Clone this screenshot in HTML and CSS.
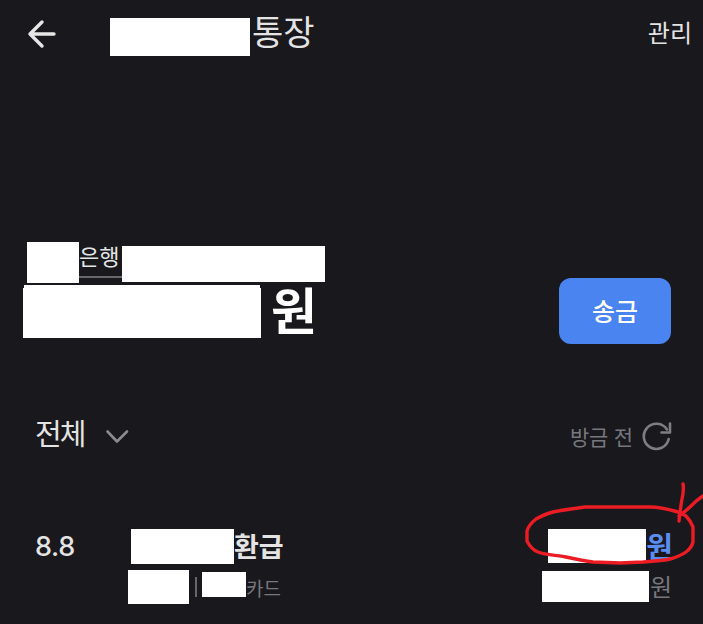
FILE: index.html
```html
<!DOCTYPE html>
<html lang="ko">
<head>
    <meta charset="UTF-8">
    <meta name="viewport" content="width=device-width, initial-scale=1.0">
    <title>통장</title>
    <link rel="stylesheet" href="styles.css">
</head>
<body>

<div class="page">
    <!-- Header -->
    <header class="topbar">
        <svg class="back-icon" width="30" height="30" viewBox="0 0 30 30" fill="none" stroke="#e6e6e6" stroke-width="3.4" stroke-linecap="round" stroke-linejoin="round">
            <path d="M27 15H3M15 3L3 15L15 27"/>
        </svg>
        <div class="mask mask-title"></div>
        <span class="title">통장</span>
        <span class="manage">관리</span>
    </header>

    <!-- Account -->
    <section class="account">
        <div class="account-info">
            <div class="bank-row">
                <div class="mask mask-bank"></div>
                <span class="bank-name">은행</span>
                <div class="mask mask-number"></div>
            </div>
            <div class="balance-row">
                <div class="balance-mask">
                    <div class="mask mask-balance-top"></div>
                    <div class="mask mask-balance"></div>
                </div>
                <span class="balance-unit">원</span>
            </div>
        </div>
        <button class="send-btn">송금</button>
    </section>

    <!-- Filter -->
    <section class="filter">
        <div class="filter-left">
            <span class="filter-name">전체</span>
            <svg class="chevron" width="24" height="15" viewBox="0 0 24 15" fill="none" stroke="#8a8a8f" stroke-width="2.6" stroke-linecap="round" stroke-linejoin="round">
                <path d="M2.5 2.5L12 12.5L22 2.5"/>
            </svg>
        </div>
        <div class="filter-right">
            <span class="updated">방금 전</span>
            <svg width="30" height="30" viewBox="0 0 30 30" fill="none" stroke="#7d7d82" stroke-width="2.6" stroke-linecap="round" stroke-linejoin="round">
                <path d="M26.7 18A12.6 12.6 0 1 1 25 8.5"/>
                <path d="M28 2.5V11.5H19.5"/>
            </svg>
        </div>
    </section>

    <!-- Transaction -->
    <section class="tx">
        <span class="tx-date">8.8</span>
        <div class="tx-main">
            <div class="tx-name">
                <div class="mask mask-name"></div>
                <span>환급</span>
            </div>
            <div class="tx-sub">
                <div class="mask mask-sub1"></div>
                <span class="tx-sep"></span>
                <div class="mask mask-sub2"></div>
                <span>카드</span>
            </div>
        </div>
        <div class="tx-amount">
            <div class="tx-value">
                <div class="mask mask-value"></div>
                <span>원</span>
            </div>
            <div class="tx-balance">
                <div class="mask mask-rest"></div>
                <span>원</span>
            </div>
        </div>
    </section>

    <!-- Red marker scribble on top of the screenshot -->
    <svg class="scribble" width="703" height="624" viewBox="0 0 703 624" fill="none" stroke="#ec1c24" stroke-width="3.4" stroke-linecap="round" stroke-linejoin="round">
        <path d="M678 512C668 509 658 507 650 507L620 507L585 507C572 509 562 510 553 512C546 514 541 516 536 519C531 523 528 527 527 531L527 541C530 547 533 550 538 552C546 555 555 555 566 557C575 559 584 561 593 562L620 563L643 562C653 561 662 561 670 559C677 557 682 555 686 552C690 549 692 546 693 542L693 527C691 522 689 519 686 516C683 514 681 513 678 512Z"/>
        <path d="M683 484C684 488 683 491 683 494C681 503 680 512 679 521"/>
        <path d="M703 496C698 499 695 502 691 506C687 510 683 513 679 516"/>
    </svg>
</div>

</body>
</html>
```

FILE: styles.css
```css
* {
    box-sizing: border-box;
}
html, body {
    margin: 0;
    padding: 0;
}
body {
    background-color: #18181d;
    font-family: "Noto Sans CJK KR", "Noto Sans", sans-serif;
    color: #e4e4e4;
}
.page {
    position: relative;
    width: 703px;
    height: 624px;
    overflow: hidden;
}
.mask {
    background: #fff;
    flex: none;
}
.scribble {
    position: absolute;
    top: 0;
    left: 0;
    pointer-events: none;
}

/* Header */
.topbar {
    display: flex;
    align-items: flex-start;
    height: 242px;
    padding: 18px 11px 0 27px;
}
.back-icon {
    margin-top: 1px;
}
.mask-title {
    width: 140px;
    height: 38px;
    margin-left: 53px;
}
.title {
    margin-left: 2px;
    margin-top: -3px;
    font-size: 34px;
    line-height: 32px;
}
.manage {
    margin-left: auto;
    font-size: 24px;
    line-height: 28px;
}

/* Account */
.account {
    display: flex;
    justify-content: space-between;
    align-items: flex-start;
    height: 173px;
    padding-right: 32px;
}
.account-info {
    display: flex;
    flex-direction: column;
}
.bank-row {
    display: flex;
    align-items: flex-start;
    padding-left: 27px;
    height: 43px;
}
.mask-bank {
    width: 52px;
    height: 41px;
}
.bank-name {
    width: 43px;
    height: 36px;
    border-bottom: 2px solid #66666b;
    font-size: 22px;
    line-height: 27px;
}
.mask-number {
    width: 203px;
    height: 36px;
    margin-top: 4px;
}
.balance-row {
    display: flex;
    align-items: center;
    padding-left: 23px;
}
.balance-mask {
    display: flex;
    flex-direction: column;
}
.mask-balance-top {
    width: 236px;
    height: 3px;
    margin-left: 1px;
}
.mask-balance {
    width: 238px;
    height: 50px;
}
.balance-unit {
    margin-left: 10px;
    margin-top: -6px;
    font-size: 50px;
    line-height: 53px;
    font-weight: 700;
    color: #fff;
}
.send-btn {
    width: 112px;
    height: 66px;
    margin-top: 36px;
    padding: 0 0 2px;
    border: none;
    border-radius: 12px;
    background-color: #4a84f0;
    color: #fff;
    font-family: inherit;
    font-size: 25px;
    font-weight: 500;
}

/* Filter */
.filter {
    display: flex;
    justify-content: space-between;
    align-items: center;
    height: 40px;
    padding: 0 31px 0 35px;
    margin-top: -1px;
}
.filter-left {
    display: flex;
    align-items: center;
    gap: 21px;
}
.filter-name {
    font-size: 29px;
    line-height: 36px;
    letter-spacing: -2px;
    margin-top: -4px;
}
.chevron {
    margin-top: 4px;
}
.filter-right {
    display: flex;
    align-items: center;
    gap: 9px;
    margin-top: 3px;
}
.updated {
    font-size: 21px;
    line-height: 28px;
    letter-spacing: -0.2px;
    color: #77777d;
}

/* Transaction */
.tx {
    display: flex;
    align-items: flex-start;
    margin-top: 75px;
    padding-right: 31px;
}
.tx-date {
    width: 128px;
    padding-left: 35px;
    font-family: Inter, "Noto Sans", sans-serif;
    font-size: 27px;
    line-height: 35px;
    font-weight: 500;
    letter-spacing: -0.3px;
}
.tx-main {
    display: flex;
    flex-direction: column;
}
.tx-name {
    display: flex;
    align-items: center;
    padding-left: 3px;
    font-size: 27px;
    line-height: 35px;
    font-weight: 700;
}
.tx-name span {
    margin-top: -2px;
}
.mask-name {
    width: 103px;
    height: 35px;
}
.tx-sub {
    display: flex;
    align-items: center;
    height: 34px;
    margin-top: 6px;
    font-size: 19px;
    color: #77777d;
}
.mask-sub1 {
    width: 61px;
    height: 34px;
}
.tx-sep {
    width: 2px;
    height: 20px;
    margin: 0 5px 0 6px;
    background: #66666b;
}
.mask-sub2 {
    width: 44px;
    height: 25px;
    margin-top: -5px;
}
.tx-amount {
    display: flex;
    flex-direction: column;
    align-items: flex-end;
    margin-left: auto;
}
.tx-value {
    display: flex;
    align-items: center;
    margin-right: -1px;
    font-size: 29px;
    line-height: 34px;
    font-weight: 700;
    color: #5b8def;
}
.tx-value span {
    margin-top: -2px;
}
.mask-value {
    width: 98px;
    height: 34px;
}
.tx-balance {
    display: flex;
    align-items: center;
    margin-top: 8px;
    font-size: 24px;
    line-height: 31px;
    color: #77777d;
}
.tx-balance span {
    margin-top: -2px;
}
.mask-rest {
    width: 107px;
    height: 31px;
    margin-right: 1px;
}
```
